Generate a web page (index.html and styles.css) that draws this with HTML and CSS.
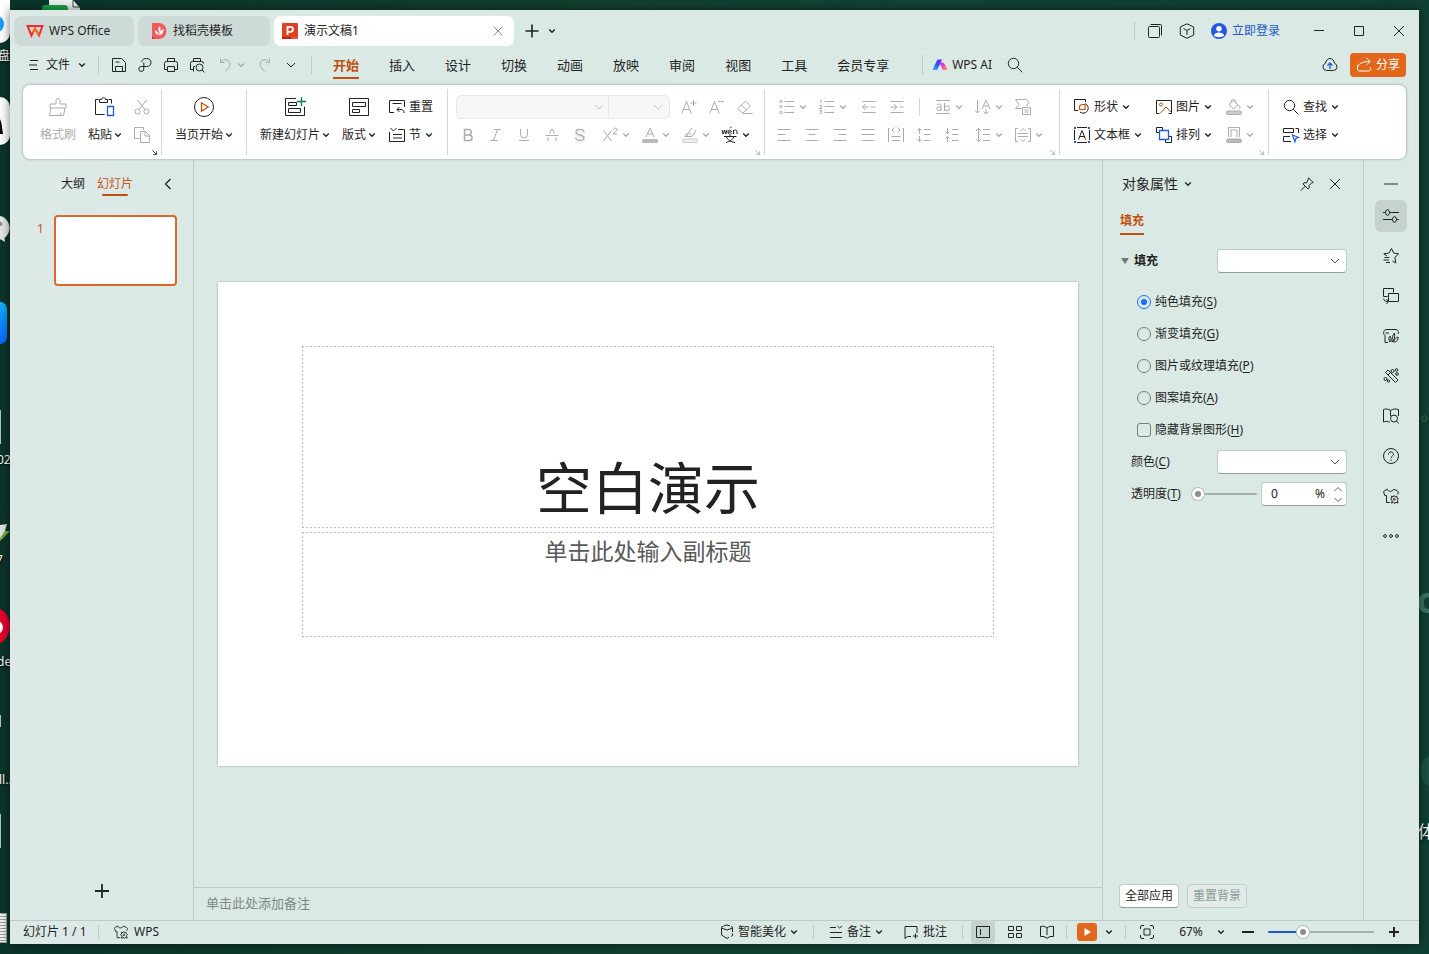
FILE: index.html
```html
<!DOCTYPE html>
<html lang="zh-CN">
<head>
<meta charset="utf-8">
<title>演示文稿1 - WPS Office</title>
<link rel="stylesheet" href="styles.css">
</head>
<body>
<svg class="defs" aria-hidden="true">
  <symbol id="chev" viewBox="0 0 8 8"><path d="M1.2 2.6 4 5.2l2.8-2.6" stroke-width="1.4"/></symbol>
  <symbol id="chev-l" viewBox="0 0 10 8"><path d="M1 2l4 4 4-4"/></symbol>
  <symbol id="corner" viewBox="0 0 6 6"><path d="M.5.5 5 5M5.5 1.500v4h-4"/></symbol>
  <symbol id="search" viewBox="0 0 16 16"><circle cx="6.5" cy="6.5" r="5.2"/><path d="m10.3 10.3 5 5"/></symbol>
  <symbol id="shirt" viewBox="0 0 16 16"><path d="M7 14.500H3.500v-7H1.800L.6 4 1.500 2.500l3-1.200C5 4 9.500 4 10.500 1.300l3.500 1.200L15.400 4l-.8 2.500"/><path d="M11 7.500l1 1.300 1.800-.5.200 1.800 1.500.9-1.300 1.200.8 2.800-2.200-.8-1 1.300-1-1.300-2.300 1 .8-2.700L7.500 11l1.300-1-.3-1.800 1.800.5z"/><circle cx="11.300" cy="11.300" r=".9"/></symbol>
</svg>

<div class="desktop" aria-hidden="true">
  <span class="d tile-a"><i></i></span>
  <span class="d dt t1">盘</span>
  <span class="d tile-b"><svg width="10" height="48" viewBox="0 0 10 48"><path d="M0 22c2 4 2 9 3 15H0z" fill="#000" stroke="none"/></svg></span>
  <svg class="d wechat" width="10" height="28" viewBox="0 0 10 28"><path d="M0 0c6 1 10 7 9.500 13C9.200 17 7 20 4.500 22l.5 4-4-2.500H0z" fill="#e6e6e6" stroke="none"/><circle cx=".5" cy="8" r="2" fill="#8b8b8b" stroke="none"/></svg>
  <span class="d tile-c"></span>
  <span class="d line l1"></span>
  <span class="d dt t2">02</span>
  <svg class="d leaf" width="10" height="20" viewBox="0 0 10 20"><path d="M0 2l7-1-4 14-3 2z" fill="#dfe5e0" stroke="none"/><path d="M5 8h5L0 18v-3z" fill="#7da73c" stroke="none"/></svg>
  <span class="d dt t3">7</span>
  <span class="d red"><i></i></span>
  <span class="d dt t4">de</span>
  <span class="d line l2"></span>
  <span class="d dt t5">ll..</span>
  <span class="d line l3"></span>
  <span class="d doc"></span>
  <svg class="d topdoc" width="40" height="10" viewBox="0 0 40 10"><path d="M7 0h24l7 8v2H7z" fill="#eef3f1" stroke="none"/><path d="M31 0v7h7" stroke="#2c4b42"/><path d="M0 10c0-4 1-5 4-5h18c3 0 4 1 4 5z" fill="#18a64a" stroke="none"/></svg>
  <span class="d ghost g1">o</span>
  <span class="d ghost g2">o</span>
  <span class="d ghost g3">o</span>
  <span class="d dt t6">体</span>
</div>

<div class="window">
  <header class="titlebar">
    <nav class="doctabs">
      <button class="doctab home"><svg class="i16" viewBox="0 0 16 16"><path d="M.5 3H14l1.500 0-3.500 9.500L8 5.500l-3.500 7z" stroke="#f02c2c" stroke-width="2"/><path d="M12 12.500 8 5.500l-2 4" stroke="#ff6a1a" stroke-width="2"/></svg>WPS Office</button>
      <button class="doctab store"><svg class="i16" viewBox="0 0 16 16"><path d="M1 0h7a7.500 8 0 0 1 0 16H1z" fill="#f25a5c" stroke="none"/><path d="M1 13l3 3H1z" fill="#c8323c" stroke="none"/><path d="M8.500 3c1.500 2 1.300 4 0 6.500C7 7 7 5.500 8.500 3zM12.500 6c.3 3-1 6-4.500 6 0-3 1.500-5 4.500-6zM4 7.500c2.500.5 3.500 2 3.500 4.500C5 11.800 4 10 4 7.500z" fill="#fff" stroke="none"/></svg>找稻壳模板</button>
      <div class="doctab active"><svg class="i16" viewBox="0 0 16 16"><rect width="16" height="16" rx="1" fill="#dd4124" stroke="none"/><path d="M0 14h9v2H0z" fill="#b52417" stroke="none"/><path d="M9 14h7v2H9z" fill="#f0512f" stroke="none"/><path d="M5.500 12V3.800h3a2.500 2.500 0 0 1 0 5h-3" stroke="#fff" stroke-width="1.800"/></svg><span>演示文稿1</span><button class="tabclose" aria-label="关闭标签"><svg class="i10" viewBox="0 0 10 10"><path d="m.7.7 8.600 8.600M9.300.7.7 9.300"/></svg></button></div>
    </nav>
    <button class="newtab" aria-label="新建"><svg class="i14" viewBox="0 0 14 14"><path d="M7 .5v13M.5 7h13" stroke-width="1.600"/></svg></button>
    <button class="newmore" aria-label="更多"><svg class="i8"><use href="#chev"/></svg></button>
    <div class="sysarea">
      <button class="slot32" aria-label="窗口"><svg class="i16" viewBox="0 0 16 16"><rect x="1.500" y="3.500" width="11" height="11" rx="1"/><path d="M3.500 1.500h10a1 1 0 0 1 1 1v10"/></svg></button>
      <button class="slot32" aria-label="应用"><svg class="i16" viewBox="0 0 16 16"><path d="M8 .8 14.700 4v8L8 15.300 1.300 12V4zM4.500 5.500 8 7.500l3.500-2M8 7.500v4.500"/></svg></button>
      <a class="login" href="#login"><svg class="i16" viewBox="0 0 16 16"><circle cx="8" cy="8" r="8" fill="#2259e0" stroke="none"/><circle cx="8" cy="5.700" r="2.700" fill="#fff" stroke="none"/><path d="M2.800 12.500c1-4 9.400-4 10.400 0-2.500 2.300-7.900 2.300-10.400 0z" fill="#fff" stroke="none"/></svg>立即登录</a>
      <button class="win" aria-label="最小化"><svg class="i12" viewBox="0 0 12 12"><path d="M1 5.500h10"/></svg></button>
      <button class="win" aria-label="最大化"><svg class="i12" viewBox="0 0 12 12"><path d="M1.500 1.500h9v9h-9z"/></svg></button>
      <button class="win" aria-label="关闭"><svg class="i12" viewBox="0 0 12 12"><path d="m1 1 10 10M11 1 1 11"/></svg></button>
    </div>
  </header>

  <div class="menubar">
    <button class="file"><svg class="i10" viewBox="0 0 10 10"><path d="M1 .5h8M0 5h8M1 9.500h8"/></svg>文件<svg class="i8"><use href="#chev"/></svg></button>
    <div class="quick">
      <button class="slot26" aria-label="保存"><svg class="i16" viewBox="0 0 16 16"><path d="M1.500 1.500h9l4 4v9h-13zM4.500 14.500v-5h7v5M4.500 5h4"/></svg></button>
      <button class="slot26" aria-label="输出"><svg class="i16" viewBox="0 0 16 16"><path d="M4.500 5C5 2.500 7 1.500 9.500 1.500c3 0 4.500 1.600 4.500 4s-1.500 4-4.500 4H4.200a2.500 2.500 0 1 0 2.600 2.500V5.500"/></svg></button>
      <button class="slot26" aria-label="打印"><svg class="i16" viewBox="0 0 16 16"><path d="M4.500 4.500v-3h7v3M4 12.500H1.500v-6a2 2 0 0 1 2-2h9a2 2 0 0 1 2 2v6H12M4.500 9.500h7v5h-7z"/></svg></button>
      <button class="slot26" aria-label="打印预览"><svg class="i16" viewBox="0 0 16 16"><path d="M4.500 4.500v-3h7v3M4 12.500H1.500v-6a2 2 0 0 1 2-2h9a2 2 0 0 1 2 2M4.500 14.500v-5H6"/><circle cx="10.500" cy="10.500" r="3.500"/><path d="m13 13 2.500 2.500"/></svg></button>
      <button class="split off undo" aria-label="撤销" disabled><svg class="i16" viewBox="0 0 16 16"><path d="M3.500 1.500v4h4M3.500 5.500C5 3 7.500 2 10 3c4 1.500 3.500 6.500.5 9L8.500 14.500"/></svg><svg class="i8"><use href="#chev"/></svg></button>
      <button class="slot24 off" aria-label="恢复" disabled><svg class="i16" viewBox="0 0 16 16"><path d="M12.500 1.500v4h-4M12.500 5.500C11 3 8.500 2 6 3 2 4.500 2.500 9.500 5.500 12l2 2.500"/></svg></button>
      <button class="slot28" aria-label="更多"><svg class="i10w"><use href="#chev-l"/></svg></button>
    </div>
    <nav class="menus">
      <a class="on" href="#home">开始</a><a href="#insert">插入</a><a href="#design">设计</a><a href="#trans">切换</a><a href="#anim">动画</a><a href="#show">放映</a><a href="#review">审阅</a><a href="#view">视图</a><a href="#tools">工具</a><a href="#member">会员专享</a>
    </nav>
    <button class="ai"><svg class="i16" viewBox="0 0 16 16"><defs><linearGradient id="ga" x1="0" y1="1" x2="1" y2="0"><stop offset="0" stop-color="#3ac1ff"/><stop offset=".5" stop-color="#2b55f5"/><stop offset="1" stop-color="#7c2cf0"/></linearGradient><linearGradient id="gb" x1="0" y1="0" x2="1" y2="1"><stop offset="0" stop-color="#9b30ff"/><stop offset=".5" stop-color="#ff3fc0"/><stop offset="1" stop-color="#ffa25c"/></linearGradient></defs><path d="M5.500 2.500h4.700L5 13H.3z" fill="url(#ga)" stroke="none"/><path d="M7.500 6c3-1 5 0 6 2.500l2 4.500h-4.500z" fill="url(#gb)" stroke="none"/></svg>WPS AI</button>
    <button class="find" aria-label="搜索"><svg class="i16"><use href="#search"/></svg></button>
    <button class="cloud" aria-label="云同步"><svg class="i16" viewBox="0 0 16 16"><path d="M4.500 13.500a3.700 3.700 0 0 1-1-7.200C4 3 6 1.500 8 1.500s4 1.500 4.500 4.800a3.700 3.700 0 0 1-1 7.200z"/><path d="M8 12V6.500M5.500 8.500 8 6l2.500 2.500" stroke="#2259e0" stroke-width="1.300"/></svg></button>
    <button class="share"><svg class="i16" viewBox="0 0 16 16"><path d="M1.500 8v4a2 2 0 0 0 2 2h9a2 2 0 0 0 2-2v-1.500M1.500 10C3 6.500 6.500 4.500 14 4.500M10.500 1l3.700 3.500-3.700 3.500"/></svg>分享</button>
  </div>

  <section class="ribbon">
    <div class="group g-clip">
      <button class="big w44 off" disabled><svg class="i20" viewBox="0 0 20 20"><path d="M8 7V3.500a2 2 0 0 1 4 0V7h6v4H2V7zM3 11 1.500 18.500h14L17 11M12 18.500l1-3"/></svg><span>格式刷</span></button>
      <button class="big w44"><svg class="i20" viewBox="0 0 20 20"><path d="M3.500 2.500h-3v15h9M13.500 2.500h3v4M4.500 2.500v3h8v-3H10.500c0-2.500-4-2.500-4 0z"/><path d="M12.500 9.500h6v9h-6z" stroke="#2259e0" stroke-width="1.300"/></svg><span>粘贴<svg class="i8"><use href="#chev"/></svg></span></button>
      <div class="rows">
        <button class="slot24 off" aria-label="剪切" disabled><svg class="i16" viewBox="0 0 16 16"><path d="m3.500 1 7.500 9.500M12.500 1 5 10.500"/><circle cx="3.500" cy="12.500" r="2.500"/><circle cx="12.500" cy="12.500" r="2.500"/></svg></button>
        <button class="slot24 off" aria-label="复制" disabled><svg class="i16" viewBox="0 0 16 16"><path d="M5 11.500H.5v-11h9V3M6.500 4.500h5l4 4v7h-9zM11 4.500v4.500h4.500"/></svg></button>
      </div>
      <svg class="corner"><use href="#corner"/></svg>
    </div>
    <div class="group g-play">
      <button class="big"><svg class="i20" viewBox="0 0 20 20"><circle cx="10" cy="10" r="9.500"/><path d="M7.500 5.800v8.400L14.200 10z" stroke="#c8500f" stroke-width="1.300"/></svg><span>当页开始<svg class="i8"><use href="#chev"/></svg></span></button>
    </div>
    <div class="group g-slide">
      <button class="big w78"><svg class="i20" viewBox="0 0 20 20"><path d="M11 1.500H.5v17h19v-9M3.500 5.500h8v3h-8zM3.500 11.500h12v4h-12z"/><path d="M16.500 0v9M12 4.500h9" stroke="#0b7a4b" stroke-width="1.300"/></svg><span>新建幻灯片<svg class="i8"><use href="#chev"/></svg></span></button>
      <button class="big w42"><svg class="i20" viewBox="0 0 20 20"><path d="M.5 1.500h19v17H.5zM3.500 5.500h13v4h-13zM3.500 12.500h7v3h-7z"/></svg><span>版式<svg class="i8"><use href="#chev"/></svg></span></button>
      <div class="rows">
        <button class="txt"><svg class="i16" viewBox="0 0 16 16"><path d="M5 13.500H.5v-12h15V8M3.500 4.500h9M8 10.500h4a3 3 0 0 1 3 3.500M10.500 8 8 10.500l2.500 2.500"/></svg>重置</button>
        <button class="txt"><svg class="i16" viewBox="0 0 16 16"><path d="M1.500 1l3 3 3-3M9 2.500h6.500v12H.5V5M4 7.500h9M4 11h9"/></svg>节<svg class="i8"><use href="#chev"/></svg></button>
      </div>
    </div>
    <div class="group g-font">
      <div class="rows">
        <div class="row">
          <div class="combo"><span class="pick wide"><select aria-label="字体" disabled><option></option></select><svg class="i10w"><use href="#chev-l"/></svg></span><span class="pick"><select aria-label="字号" disabled><option></option></select><svg class="i10w"><use href="#chev-l"/></svg></span></div>
          <button class="slot28 off" aria-label="增大字号" disabled><svg class="i16" viewBox="0 0 16 16"><path d="M.8 14.500 5.500 2.500l4.700 12M2.500 10.500h6M12.500 1v6M9.500 4h6"/></svg></button>
          <button class="slot28 off" aria-label="减小字号" disabled><svg class="i16" viewBox="0 0 16 16"><path d="M.8 14.500 5.500 2.500l4.700 12M2.500 10.500h6M9 2.500h6"/></svg></button>
          <button class="slot28 off" aria-label="清除格式" disabled><svg class="i16" viewBox="0 0 16 16"><path d="M1 9.500 8.500 2l5 5L6.500 13.500H5zM4.500 6l5 5M6 14.500h9.500"/></svg></button>
        </div>
        <div class="row tight off">
          <button class="slot28" aria-label="加粗" disabled><svg class="i16" viewBox="0 0 16 16"><path d="M4.500 2.500h4a2.700 2.700 0 0 1 0 5.400h-4zM4.500 8h4.800a2.700 2.700 0 0 1 0 5.500H4.500z" stroke-width="1.500"/></svg></button>
          <button class="slot28" aria-label="倾斜" disabled><svg class="i16" viewBox="0 0 16 16"><path d="M6 2.500h7M2.500 13.500h7M9.500 2.500l-4 11"/></svg></button>
          <button class="slot28" aria-label="下划线" disabled><svg class="i16" viewBox="0 0 16 16"><path d="M4.500 2v5.500a3.500 3.500 0 0 0 7 0V2M3 13.500h10"/></svg></button>
          <button class="slot28" aria-label="删除线" disabled><svg class="i16" viewBox="0 0 16 16"><path d="M1.500 8.500h13M5.500 6.500 8 2l2.500 4.500M4.500 10.500 3.500 14M11.500 10.500l1 3.500"/></svg></button>
          <button class="slot28 glow" aria-label="阴影" disabled><svg class="i16" viewBox="0 0 16 16"><path d="M12 5c-.3-3.500-8-3.500-8 0 0 4 8 2 8 5.800 0 3.500-8 3.500-8.300-.3" stroke-width="1.300"/></svg></button>
          <button class="split first" aria-label="上标" disabled><svg class="i16" viewBox="0 0 16 16"><path d="m1.500 3.500 8 10.500M9.500 3.500l-8 10.500M11.500 3c0-2.500 3.500-2.500 3.500 0 0 1.500-3.500 2-3.500 4H15"/></svg><svg class="i8"><use href="#chev"/></svg></button>
          <button class="split" aria-label="字体颜色" disabled><svg class="i16" viewBox="0 0 16 16"><path d="M4 10 8 1l4 9M5.500 7h5"/><rect y="12" width="16" height="4" rx="1.500" fill="#b8b8b8" stroke="none"/></svg><svg class="i8"><use href="#chev"/></svg></button>
          <button class="split" aria-label="突出显示" disabled><svg class="i16" viewBox="0 0 16 16"><path d="M3 9.500h7L14 3M5 9l1.500-3.500L9.500 8M6.500 5.500 10 1M3 9.500 5 6"/><rect x=".5" y="12" width="15" height="3.500" rx="1.500" fill="#eee" stroke="#ccc"/></svg><svg class="i8"><use href="#chev"/></svg></button>
          <button class="split dark" aria-label="拼音"><svg class="i16" viewBox="0 0 16 16"><path d="M0 3l1.200 4L2.500 3l1.300 4L5 3M6 5h3.500c0-2.500-3.500-2.500-3.500 0s2 2.500 3.500 1.500M11.500 7V3M11.500 4.500c.5-2 3.500-2 3.500 0V7M8 1.200l1.500-1.500M2 9.500h12.500M8 8v1.500M4 15.500c4-1 7-3 8-6M4.500 10c1 3 4 5 8.500 5.500"/></svg><svg class="i8"><use href="#chev"/></svg></button>
        </div>
      </div>
      <svg class="corner off"><use href="#corner"/></svg>
    </div>
    <div class="group g-para off">
      <div class="rows">
        <div class="row r1">
          <button class="split" aria-label="项目符号" disabled><svg class="i16" viewBox="0 0 16 16"><circle cx="2" cy="2.500" r="1.200"/><circle cx="2" cy="7.500" r="1.200"/><circle cx="2" cy="13.500" r="1.200"/><path d="M5.500 2.500H15M5.500 7.500H15M5.500 13.500H15"/></svg><svg class="i8"><use href="#chev"/></svg></button>
          <button class="split" aria-label="编号" disabled><svg class="i16" viewBox="0 0 16 16"><path d="M1 1.500h1V4M.5 6.500h2V8L.5 9.500h2.500M.5 11.500h2.300L1.500 13c2.500 0 1 2.500-1 1.500M5.500 2.500H15M5.500 7.500H15M5.500 13.500H15"/></svg><svg class="i8"><use href="#chev"/></svg></button>
          <button class="slot28" aria-label="减少缩进" disabled><svg class="i16" viewBox="0 0 16 16"><path d="M1.500 2.500h13M9.500 8h5M1.500 13.500h13M7.500 8H1.500M4.500 5 1.500 8l3 3"/></svg></button>
          <button class="slot28" aria-label="增加缩进" disabled><svg class="i16" viewBox="0 0 16 16"><path d="M1.500 2.500h13M10.500 8h4M1.500 13.500h13M1.500 8H8M5 5l3 3-3 3"/></svg></button>
          <span class="bar"></span>
          <button class="split" aria-label="文字间距" disabled><svg class="i16" viewBox="0 0 16 16"><path d="M1 1.500h14M1 14.500h14M2 6c1-1.500 4-1.500 4 .5V12M6 8C2 8 1.500 9 1.500 10s2 2.500 4.500.5M9.500 4v8"/><circle cx="12" cy="9.300" r="2.500"/></svg><svg class="i8"><use href="#chev"/></svg></button>
          <button class="split" aria-label="文字方向" disabled><svg class="i16" viewBox="0 0 16 16"><path d="M2.500 1v13M0 11.500 2.500 14 5 11.500M7 10l4-9 4 9M8.500 7h5M11 10v5M8.500 12.500 11 15l2.500-2.500"/></svg><svg class="i8"><use href="#chev"/></svg></button>
          <button class="slot24" aria-label="转换图形" disabled><svg class="i16" viewBox="0 0 16 16"><path d="M6.500 9.500H.5L4 5.500.5.500h11L14 3.500 11.500 7M7.500 8.500h8v7h-8zM9.500 11h4M9.500 13h4"/></svg></button>
        </div>
        <div class="row r2">
          <button class="slot28" aria-label="左对齐" disabled><svg class="i16" viewBox="0 0 16 16"><path d="M1.500 2.500h13M1.500 7.500h8M1.500 13.500h13"/></svg></button>
          <button class="slot28" aria-label="居中" disabled><svg class="i16" viewBox="0 0 16 16"><path d="M1.500 2.500h13M4.500 7.500h7M1.500 13.500h13"/></svg></button>
          <button class="slot28" aria-label="右对齐" disabled><svg class="i16" viewBox="0 0 16 16"><path d="M1.500 2.500h13M6.500 7.500h8M1.500 13.500h13"/></svg></button>
          <button class="slot28" aria-label="两端对齐" disabled><svg class="i16" viewBox="0 0 16 16"><path d="M1.500 2.500h13M1.500 7.500h13M1.500 13.500h13"/></svg></button>
          <button class="slot28" aria-label="分散对齐" disabled><svg class="i16" viewBox="0 0 16 16"><path d="M.5 1v14M15.500 1v14M3.500 9.500h9M3.500 13.500h9M6.500.5 4 3l2.500 2.500M9.500.5 12 3 9.500 5.500"/></svg></button>
          <button class="slot28" aria-label="增大段距" disabled><svg class="i16" viewBox="0 0 16 16"><path d="M3.500 7V1.500M1.500 3.500l2-2 2 2M3.500 9v5.500M1.500 12.500l2 2 2-2M8 2.500h6.500M8 7.500h6.500M8 13.500h6.500"/></svg></button>
          <button class="slot28" aria-label="减小段距" disabled><svg class="i16" viewBox="0 0 16 16"><path d="M3.500 1v5.500M1.500 4.500l2 2 2-2M3.500 15V9.500M1.500 11.500l2-2 2 2M8 2.500h6.500M8 7.500h6.500M8 13.500h6.500"/></svg></button>
          <button class="split last" aria-label="行距" disabled><svg class="i16" viewBox="0 0 16 16"><path d="M3.500 1.500v13M1 4l2.500-2.500L6 4M1 12l2.500 2.500L6 12M8 2.500h7M8 7.500h7M8 13.500h7"/></svg><svg class="i8"><use href="#chev"/></svg></button>
          <button class="split" aria-label="对齐文本" disabled><svg class="i16" viewBox="0 0 16 16"><path d="M3 1.500H.5v13H3M13 1.500h2.500v13H13M3 6.500h10M3 9.500h10M5.500 4 8 1.500 10.500 4M5.500 12 8 14.500l2.500-2.500"/></svg><svg class="i8"><use href="#chev"/></svg></button>
        </div>
      </div>
      <svg class="corner"><use href="#corner"/></svg>
    </div>
    <div class="group g-draw">
      <div class="grid">
        <button class="txt"><svg class="i16" viewBox="0 0 16 16"><path d="M4 11.500H.5V.5h11V3"/><path d="M6 13a5 5 0 1 0 5-8.500" /><path d="M5.500 10.500v-2a3 3 0 0 1 3-3h2.500v5z" stroke="#c8500f" stroke-width="1.200"/></svg>形状<svg class="i8"><use href="#chev"/></svg></button>
        <button class="txt"><svg class="i16" viewBox="0 0 16 16"><path d="M3.500 14.500h-3v-13h15v13h-3"/><circle cx="5" cy="5.500" r="1.500" stroke="#c8500f"/><path d="m4 14.500 6-6.500 5.500 5.500" stroke="#c8500f"/></svg>图片<svg class="i8"><use href="#chev"/></svg></button>
        <button class="split off" aria-label="填充" disabled><svg class="i16" viewBox="0 0 16 16"><path d="M3 5.500 7.500 1.500 12 6 7.500 10zM5 3.500C5-.5 10-.5 10 3.500M12.500 6c2 2 2 3.500.5 3.500"/><rect x=".5" y="12" width="15" height="3.500" rx="1.500" fill="#ccc"/></svg><svg class="i8"><use href="#chev"/></svg></button>
        <button class="txt"><svg class="i16" viewBox="0 0 16 16"><path d="M3 .5h10M3 15.500h10M.5 3v10M15.500 3v10M4.500 12.500 8 3.500l3.500 9M5.500 9.500h5"/><path d="M0 0h2v2H0zM14 0h2v2h-2zM0 14h2v2H0zM14 14h2v2h-2z" fill="#2259e0" stroke="none"/></svg>文本框<svg class="i8"><use href="#chev"/></svg></button>
        <button class="txt"><svg class="i16" viewBox="0 0 16 16"><path d="M3 5.500H.5v-5h6V3M13 9.500h2.500v6h-6V13"/><path d="M3.500 3.500h9v9h-9z" stroke="#2259e0" stroke-width="1.300"/></svg>排列<svg class="i8"><use href="#chev"/></svg></button>
        <button class="split off" aria-label="轮廓" disabled><svg class="i16" viewBox="0 0 16 16"><path d="M2.500 10V.5h11V10M5 10V3h6v7"/><rect x=".5" y="12" width="15" height="3.500" rx="1.500" fill="#bbb"/></svg><svg class="i8"><use href="#chev"/></svg></button>
      </div>
      <svg class="corner off"><use href="#corner"/></svg>
    </div>
    <div class="group g-edit">
      <div class="rows">
        <button class="txt"><svg class="i16"><use href="#search"/></svg>查找<svg class="i8"><use href="#chev"/></svg></button>
        <button class="txt"><svg class="i16" viewBox="0 0 16 16"><path d="M.5 1.500h10v4H.5zM12.500 1.500h3V6M7 9.500H.5v5H8"/><path d="m9.500 8 6 2.500-2.700 1-.9 3.200z" stroke="#2259e0" stroke-width="1.200"/></svg>选择<svg class="i8"><use href="#chev"/></svg></button>
      </div>
    </div>
  </section>

  <main class="work">
    <aside class="thumbs">
      <div class="thumbtabs"><button>大纲</button><button class="on">幻灯片</button><button class="fold" aria-label="收起"><svg class="i12" viewBox="0 0 12 12"><path d="M8.500 1 3.500 6l5 5" stroke-width="1.300"/></svg></button></div>
      <div class="thumbrow"><span>1</span><div class="thumb"></div></div>
      <button class="addslide" aria-label="新建幻灯片"><svg class="i14" viewBox="0 0 14 14"><path d="M7 0v14M0 7h14" stroke-width="1.800"/></svg></button>
    </aside>

    <section class="center">
      <div class="canvas">
        <article class="slide">
          <h1 class="ph title">空白演示</h1>
          <p class="ph sub">单击此处输入副标题</p>
        </article>
      </div>
      <p class="notes">单击此处添加备注</p>
    </section>

    <aside class="props">
      <div class="phead"><h2>对象属性</h2><svg class="i8"><use href="#chev"/></svg><button class="slot28 pin" aria-label="固定"><svg class="i14" viewBox="0 0 14 14"><path d="m8.500.8 4.700 4.700-1.700.5-2.500 2.500.3 2.500-1.300 1L3 7l1-1.300 2.500.3L8 3zM5 9.500.8 13.500"/></svg></button><button class="slot28" aria-label="关闭"><svg class="i12" viewBox="0 0 12 12"><path d="m1 1 10 10M11 1 1 11"/></svg></button></div>
      <div class="ptabs"><button class="on">填充</button></div>
      <div class="field first"><span class="tri"></span><label class="bold" for="fill">填充</label><span class="pick box"><select id="fill"><option></option></select><svg class="i10w"><use href="#chev-l"/></svg></span></div>
      <div class="options">
        <label><input type="radio" name="fill" checked><span>纯色填充(<u>S</u>)</span></label>
        <label><input type="radio" name="fill"><span>渐变填充(<u>G</u>)</span></label>
        <label><input type="radio" name="fill"><span>图片或纹理填充(<u>P</u>)</span></label>
        <label><input type="radio" name="fill"><span>图案填充(<u>A</u>)</span></label>
        <label><input type="checkbox"><span>隐藏背景图形(<u>H</u>)</span></label>
      </div>
      <div class="field"><label for="color">颜色(<u>C</u>)</label><span class="pick box"><select id="color"><option></option></select><svg class="i10w"><use href="#chev-l"/></svg></span></div>
      <div class="field"><label for="alpha">透明度(<u>T</u>)</label><input class="range alpha" type="range" min="0" max="100" value="0" aria-label="透明度滑块"><span class="spin"><input id="alpha" type="text" value="0"><span>%</span><span class="ud"><svg class="i8" viewBox="0 0 8 8"><path d="M.5 6 4 2.500 7.500 6"/></svg><svg class="i8" viewBox="0 0 8 8"><path d="M.5 2 4 5.500 7.500 2"/></svg></span></span></div>
      <div class="pfoot"><button class="pbtn">全部应用</button><button class="pbtn gray" disabled>重置背景</button></div>
    </aside>

    <nav class="side">
      <button class="min" aria-label="折叠"><svg class="i16" viewBox="0 0 16 16"><path d="M1 8h14" stroke="#888" stroke-width="2"/></svg></button>
      <button class="on" aria-label="对象属性"><svg class="i16" viewBox="0 0 16 16"><ellipse cx="4.500" cy="4.500" rx="2" ry="2.800"/><ellipse cx="11.500" cy="11.500" rx="2" ry="2.800"/><path d="M0 4.500h2.500M6.500 4.500H16M0 11.500h9.500M13.500 11.500H16"/></svg></button>
      <button aria-label="动画"><svg class="i16" viewBox="0 0 16 16"><path d="M4 8 .8 5.800l5.200-.8L8.500.5l2.200 4.500 5 .8-3.800 3.600 1 5.600-3.400-2M1.500 9.500h5M.5 12H6M3 14.500h4"/></svg></button>
      <button aria-label="切换"><svg class="i16" viewBox="0 0 16 16"><path d="M4.500 8.500h-4v-8h10v4M5.500 5.500h10v8h-10zM.8 10.500c0 2 1 3 4 3M3.500 11l2 2.500-2 2.500"/></svg></button>
      <button aria-label="素材"><svg class="i16" viewBox="0 0 16 16"><path d="M5 14.500H2v-7C-.5 5.500.5 1.500 4 1.500h9c2.500.5 3 3 2 4.500M6 5H2.500M7 14c-2-3-1-5 0-6 1 2 1.500 4 0 6zM9 14c0-4 .5-7 2.500-9 .5 4 0 7-2.500 9zM10.500 14c1-3 2.500-4.500 4.500-5 .5 3-1 5-4.500 5z"/></svg></button>
      <button aria-label="智能美化"><svg class="i16" viewBox="0 0 16 16"><path d="M2.500 4.500 5 2l10 10-2.500 2.500zM5 7l2.500-2.500"/><circle cx="9.500" cy="3" r="1.500"/><circle cx="13.500" cy="2" r="1.300"/><circle cx="14" cy="6" r="1.300"/><circle cx="2.500" cy="11" r="1.500"/><circle cx="5.500" cy="13" r="1.200"/></svg></button>
      <button aria-label="资料"><svg class="i16" viewBox="0 0 16 16"><path d="M7 14.500c-2-1.500-4-1.500-6.500-.5V1.500c2.500-1 5-.5 7 1 2-1.500 5-2 8-1V8M7.500 2.500V8"/><circle cx="11" cy="10.500" r="3.500"/><path d="m13.500 13 2 2.500"/></svg></button>
      <button aria-label="帮助"><svg class="i16" viewBox="0 0 16 16"><circle cx="8" cy="8" r="7.500"/><path d="M5.500 6.500c0-3.500 5-3.500 5 0C10.500 8 8 8 8 10M8 11.500V13"/></svg></button>
      <button aria-label="皮肤"><svg class="i16"><use href="#shirt"/></svg></button>
      <button aria-label="更多"><svg class="i16" viewBox="0 0 16 16"><circle cx="2" cy="8" r="1.400"/><circle cx="8" cy="8" r="1.400"/><circle cx="14" cy="8" r="1.400"/></svg></button>
    </nav>
  </main>

  <footer class="status">
    <span class="pages">幻灯片 1 / 1</span>
    <button class="skin"><svg class="i14" viewBox="0 0 16 16"><use href="#shirt"/></svg>WPS</button>
    <div class="right">
      <button class="st s1"><svg class="i14" viewBox="0 0 14 14"><path d="M4 .8 7 0l3 .8M1.500 3 7 5l5.500-2M1.500 3v7L7 13.500l2-1.200M1 2.500 3.500 1M12.500 3v4M11 11.500l1.500-1V8.500M11 1.500l2 1"/></svg>智能美化<svg class="i8"><use href="#chev"/></svg></button>
      <button class="st s2"><svg class="i14" viewBox="0 0 14 14"><path d="M1 2.500h6M1 7.500h12M1 12.500h12M8.500 1l2.200 2L13 1"/></svg>备注<svg class="i8"><use href="#chev"/></svg></button>
      <button class="st s3"><svg class="i14" viewBox="0 0 14 14"><path d="M7 11.500H3.500L1 13.500v-12h12V8M11.500 8.500v5M9 11h5"/></svg>批注</button>
      <div class="views">
        <button class="on" aria-label="普通视图"><svg class="i14" viewBox="0 0 14 14"><path d="M.5 1.500h13v11H.5zM4.500 4v6"/></svg></button>
        <button aria-label="浏览视图"><svg class="i14" viewBox="0 0 14 14"><path d="M.5 1.500h5v4h-5zM8.500 1.500h5v4h-5zM.5 8.500h5v4h-5zM8.500 8.500h5v4h-5z"/></svg></button>
        <button aria-label="阅读视图"><svg class="i14" viewBox="0 0 14 14"><path d="M7 3C5 1.300 3 1 .5 1.500v10H4l3 1.800 3-1.800h3.500v-10C11 1 9 1.300 7 3zM7 3v7"/></svg></button>
      </div>
      <div class="playbox"><button class="play" aria-label="放映"><svg class="i10" viewBox="0 0 10 10"><path d="M2.500 1 9 5 2.500 9z" fill="#fff" stroke="none"/></svg></button><button class="slot24" aria-label="放映选项"><svg class="i8"><use href="#chev"/></svg></button></div>
      <button class="fit" aria-label="适应窗口"><svg class="i14" viewBox="0 0 14 14"><path d="M4 .5H2A1.500 1.500 0 0 0 .5 2v2M10 .5h2A1.500 1.500 0 0 1 13.500 2v2M.5 10v2A1.500 1.500 0 0 0 2 13.500h2M13.500 10v2a1.500 1.500 0 0 1-1.500 1.500h-2M4 4h6v6H4z"/></svg></button>
      <button class="zoomval">67%<svg class="i8"><use href="#chev"/></svg></button>
      <button class="slot24" aria-label="缩小"><svg class="i12" viewBox="0 0 12 12"><path d="M0 6h12" stroke-width="2"/></svg></button>
      <input class="range zoom" type="range" min="0" max="100" value="31" aria-label="缩放">
      <button class="slot24" aria-label="放大"><svg class="i10" viewBox="0 0 10 10"><path d="M0 5h10M5 0v10" stroke-width="2"/></svg></button>
    </div>
  </footer>
</div>
</body>
</html>
```
FILE: styles.css
```css
* { box-sizing: border-box; }

body {
  margin: 0;
  height: 100vh;
  overflow: hidden;
  display: flex;
  padding: 10px;
  position: relative;
  background: linear-gradient(90deg, #0b352b, #11402f 40%, #124336 60%, #104034);
  font: 12px/16px "Noto Sans", "Noto Sans CJK SC", sans-serif;
  color: #1f2423;
}

h1, h2, p { margin: 0; font-weight: 400; }
a { color: inherit; text-decoration: none; }
button, input, select { font: inherit; color: inherit; margin: 0; }
button { border: 0; padding: 0; background: none; display: flex; align-items: center; justify-content: center; flex: none; white-space: nowrap; }
svg { fill: none; stroke: currentColor; stroke-width: 1; flex: none; display: block; overflow: visible; }
.defs { position: absolute; width: 0; height: 0; }
.i8 { width: 8px; height: 8px; }
.i10 { width: 10px; height: 10px; }
.i10w { width: 10px; height: 8px; }
.i12 { width: 12px; height: 12px; }
.i14 { width: 14px; height: 14px; }
.i16 { width: 16px; height: 16px; }
.i20 { width: 20px; height: 20px; }
.off { color: #a9adab; }
.dark { color: #222; }
.slot24 { width: 24px; height: 24px; }
.slot26 { width: 26px; height: 24px; }
.slot28 { width: 28px; height: 24px; }
.slot32 { width: 32px; height: 32px; }
.split { width: 32px; height: 24px; padding-left: 4px; gap: 4px; justify-content: flex-start; }

/* desktop behind the window */
.desktop { position: absolute; inset: 0; overflow: hidden; }
.d { position: absolute; left: 0; }
.dt { color: #fff; text-shadow: 1px 1px 2px #000; white-space: nowrap; }
.tile-a { top: 0; width: 10px; height: 43px; background: #fff; border-radius: 0 0 10px 0; overflow: hidden; }
.tile-a i { position: absolute; left: -10px; top: 16px; width: 14px; height: 16px; border-radius: 50%; background: #12a0ff; }
.t1 { top: 48px; left: -2px; }
.tile-b { top: 97px; width: 10px; height: 48px; background: #fff; border-radius: 0 10px 10px 0; }
.wechat { top: 216px; }
.tile-c { top: 302px; width: 7px; height: 42px; border-radius: 0 8px 8px 0; background: linear-gradient(#0fb2ff, #0a66ff); }
.line { width: 1px; background: #b6c2be; }
.l1 { top: 410px; height: 34px; }
.t2 { top: 452px; left: -3px; }
.leaf { top: 523px; }
.t3 { top: 552px; left: -4px; }
.red { top: 606px; left: -30px; width: 40px; height: 40px; border-radius: 50%; background: #e5002d; }
.red i { position: absolute; right: 7px; top: 15px; width: 12px; height: 13px; border-radius: 50%; background: #fff; }
.t4 { top: 654px; left: -3px; }
.l2 { top: 715px; height: 12px; }
.t5 { top: 772px; left: -1px; }
.l3 { top: 814px; height: 34px; }
.doc { top: 913px; width: 7px; height: 30px; border: 1px solid #9aa19e; border-left: 0; background: repeating-linear-gradient(#f4f4f4 0 2px, #999 2px 3px); }
.topdoc { left: 42px; top: 0; }
.ghost { left: auto; right: -4px; color: #3a7464; font-weight: 700; }
.g1 { top: 410px; right: 1px; color: #23584b; }
.g2 { top: 580px; right: -10px; font-size: 36px; line-height: 40px; }
.g3 { top: 740px; right: -26px; font-size: 60px; line-height: 48px; color: #1d5144; }
.t6 { top: 821px; left: auto; right: -6px; font-size: 17px; line-height: 22px; }

.window {
  position: relative;
  flex: 1;
  min-width: 0;
  display: flex;
  flex-direction: column;
  background: linear-gradient(90deg, #dde9e7, #dae9e4 16%, #dbe9e4);
  box-shadow: 0 0 10px rgba(0, 0, 0, .55);
}

/* title bar */
.titlebar { display: flex; align-items: center; height: 40px; padding-left: 4px; padding-top: 1px; flex: none; }
.doctabs { display: flex; gap: 4px; }
.doctab { display: flex; align-items: center; justify-content: flex-start; gap: 6px; height: 30px; border-radius: 7px; background: #cddad7; padding: 0 12px; }
.home { width: 120px; padding-left: 13px; }
.store { width: 132px; padding-left: 13px; }
.doctab.active { width: 240px; background: #fff; padding: 0 8px; }
.tabclose { margin-left: auto; width: 16px; height: 16px; color: #8a8a8a; }
.newtab { width: 36px; height: 30px; }
.newmore { width: 4px; height: 30px; }
.sysarea { display: flex; align-items: center; margin-left: auto; height: 40px; }
.sysarea::before { content: ""; width: 1px; height: 18px; background: #bfcdc9; margin-right: 4px; }
.login { display: flex; align-items: center; gap: 5px; color: #2259c8; margin: 0 19px 0 8px; }
.login svg { color: #fff; }
.win { width: 40px; height: 40px; }

/* menu bar */
.menubar { display: flex; align-items: center; height: 34px; padding: 0 13px 4px 19px; flex: none; }
.file { gap: 7px; margin-right: 12px; }
.file .i8 { margin-left: 1px; }
.quick { display: flex; align-items: center; height: 18px; padding: 0 6px 0 7px; border: solid #bfcdc9; border-width: 0 1px; }
.quick .split { margin: 0 8px 0 3px; }
.menus { display: flex; gap: 30px; margin-left: 21px; font-size: 13px; line-height: 20px; height: 20px; white-space: nowrap; }
.menus a { border-bottom: 2px solid transparent; height: 24px; }
.menus a.on { color: #c0500f; border-color: #c0500f; font-weight: 700; }
.ai { gap: 4px; margin-left: 33px; padding-left: 9px; height: 20px; border-left: 1px solid #bfcdc9; }
.find { margin-left: 15px; }
.cloud { margin-left: auto; margin-right: 12px; }
.share { width: 56px; height: 24px; gap: 4px; border-radius: 4px; background: #e3671b; color: #fff; }

/* ribbon */
.ribbon { display: flex; flex: none; margin: 1px 13px; padding: 4px 0; height: 74px; background: #fff; border-radius: 7px; box-shadow: 0 0 3px rgba(70, 100, 90, .55); position: relative; z-index: 1; }
.group { position: relative; display: flex; flex: none; align-items: flex-start; padding-top: 4px; border-right: 1px solid #d4d7d6; }
.rows { display: flex; flex-direction: column; }
.rows > *, .grid > * { height: 28px; }
.row { display: flex; align-items: center; }
.big { display: grid; grid-template-rows: 28px 28px; place-items: center; }
.big span { display: flex; align-items: center; gap: 2px; }
.txt { gap: 4px; justify-content: flex-start; }
.w42 { width: 42px; }
.w44 { width: 44px; }
.w78 { width: 78px; }
.corner { position: absolute; right: 4px; bottom: 0; width: 5px; height: 5px; }
.g-clip { width: 139px; padding-left: 13px; gap: 3px; }
.g-play { width: 85px; justify-content: center; }
.g-slide { width: 201px; padding-left: 9px; gap: 4px; }
.g-slide .rows { padding-left: 5px; }
.g-font { width: 317px; padding-left: 6px; }
.g-font .split { margin-right: 8px; }
.g-font .first { margin-left: 4px; }
.combo { display: flex; width: 214px; height: 24px; margin: 0 5px 0 2px; border: 1px solid #e8e8e8; border-radius: 5px; background: #f7f7f7; color: #c8c8c8; }
.pick { position: relative; display: flex; flex: 1; }
.pick select { appearance: none; flex: 1; width: 100%; border: 0; background: none; opacity: 1; padding: 0 24px 0 8px; }
.pick svg { position: absolute; right: 6px; top: 50%; margin-top: -4px; pointer-events: none; }
.wide { flex: 0 0 152px; border-right: 1px solid #e8e8e8; }
.wide svg { right: 4px; }
.glow svg { filter: drop-shadow(0 2px 1px #ddd); }
.g-para { width: 295px; }
.r1 { padding-left: 10px; }
.r1 .split { margin-right: 8px; }
.r2 { padding-left: 5px; }
.r2 .split { margin-right: 8px; }
.r2 .last { margin-left: 5px; }
.bar { width: 1px; height: 18px; background: #d4d7d6; margin: 0 11px 0 8px; }
.g-draw { width: 209px; padding-left: 14px; }
.grid { display: grid; grid-template-columns: 82px 66px 32px; }
.g-edit { border: 0; padding-left: 14px; }

/* work area */
.work { flex: 1; min-height: 0; display: flex; }
.thumbs { width: 184px; flex: none; border-right: 1px solid #bccbc7; display: flex; flex-direction: column; }
.thumbtabs { display: flex; gap: 12px; padding: 16px 19px 0 51px; }
.thumbtabs .on { position: relative; color: #c8541a; }
.thumbtabs .on::after { content: ""; position: absolute; left: 5px; right: 5px; bottom: -4px; height: 2px; background: #c0500f; border-radius: 1px; }
.fold { margin-left: auto; }
.thumbrow { display: flex; gap: 10px; padding: 23px 16px 0 27px; }
.thumbrow span { color: #c8541a; padding-top: 6px; width: 7px; }
.thumb { flex: 1; aspect-ratio: 123 / 71; background: #fff; border: 2px solid #d96a2b; border-radius: 4px; }
.addslide { margin: auto auto 22px 85px; }
.center { flex: 1; min-width: 0; display: flex; flex-direction: column; }
.canvas { flex: 1; min-height: 0; display: flex; align-items: center; padding: 1px 24px 0; }
.slide { flex: 1; aspect-ratio: 16 / 9; background: #fff; box-shadow: 0 0 2px #8fa19b; padding: 64px 84px 0; display: flex; flex-direction: column; gap: 4px; }
.ph {
  --h: repeating-linear-gradient(90deg, #bdbdbd 0 2px, transparent 2px 4px);
  --v: repeating-linear-gradient(#bdbdbd 0 2px, transparent 2px 4px);
  background: var(--h) top / 100% 1px no-repeat, var(--h) bottom / 100% 1px no-repeat, var(--v) left / 1px 100% no-repeat, var(--v) right / 1px 100% no-repeat;
  text-align: center;
}
.title { height: 182px; font-size: 56px; line-height: 64px; display: flex; align-items: flex-end; justify-content: center; padding-bottom: 9px; color: #222; }
.sub { height: 105px; font-size: 23px; line-height: 32px; padding-top: 3px; color: #595959; }
.notes { border-top: 1px solid #bccbc7; height: 33px; padding: 7px 12px; font-size: 13px; color: #7d8885; }

/* property panel */
.props { width: 262px; flex: none; border: solid #c9cccb; border-width: 0 1px; display: flex; flex-direction: column; padding: 0 16px 12px; }
.phead { display: flex; align-items: center; height: 24px; margin-top: 12px; padding-left: 3px; }
.phead h2 { font-size: 14px; line-height: 20px; margin-right: 6px; }
.pin { margin-left: auto; }
.phead .slot28:last-child { margin-right: -2px; }
.ptabs { display: flex; margin-top: 17px; padding-left: 1px; }
.ptabs button { color: #c0500f; font-weight: 700; border-bottom: 2px solid #c0500f; padding-bottom: 4px; }
.field { display: flex; align-items: center; height: 32px; padding-left: 12px; }
.field.first { padding-left: 2px; margin-top: 10px; }
.tri { border: 4px solid transparent; border-top: 6px solid #6f7775; border-bottom: 0; margin-right: 5px; }
.bold { font-weight: 700; }
.box { flex: 0 0 130px; height: 24px; margin-left: auto; }
.box svg { color: #555; }
.box, .spin, .pbtn { background: #fff; border: 1px solid #bfcdc9; border-bottom-color: #92a09c; border-radius: 4px; }
.options { padding: 9px 0 0 18px; }
.options label { display: flex; align-items: center; gap: 4px; height: 32px; }
.options input { appearance: none; width: 14px; height: 14px; border: 1px solid #75807d; border-radius: 50%; display: grid; place-items: center; }
.options input[type="checkbox"] { border-radius: 3px; }
.options input:checked { border-color: #1a6cff; }
.options input:checked::before { content: ""; width: 6px; height: 6px; border-radius: 50%; background: #1a6cff; }
u { text-underline-offset: 2px; }
.range { appearance: none; height: 16px; background: none; }
.range::-webkit-slider-runnable-track { height: 2px; border-radius: 1px; background: #a5afac; }
.range::-webkit-slider-thumb { appearance: none; width: 12px; height: 12px; margin-top: -5px; border-radius: 50%; border: 3px solid #fff; background: #8a8f8d; box-shadow: 0 0 0 1px #b4bebb; }
.alpha { width: 65px; margin-left: auto; margin-right: 4px; }
.spin { display: flex; align-items: center; width: 86px; height: 24px; padding: 0 4px 0 9px; }
.spin input { border: 0; padding: 0; width: 44px; background: none; }
.ud { display: flex; flex-direction: column; gap: 3px; margin-left: auto; color: #666; }
.pfoot { display: flex; gap: 8px; margin-top: auto; }
.pbtn { width: 60px; height: 24px; }
.gray { background: #e2ebe8; border-color: #c2cecb; color: #8d9795; }

/* side strip */
.side { width: 55px; flex: none; display: flex; flex-direction: column; align-items: center; gap: 8px; padding: 16px 1px 0 0; }
.side button { width: 32px; height: 32px; border-radius: 6px; }
.side .min { height: 16px; }
.side .on { background: #c5d2ce; }

/* status bar */
.status { display: flex; align-items: center; flex: none; height: 24px; padding: 0 13px 1px; border-top: 1px solid #bccbc7; }
.pages { width: 76px; border-right: 1px solid #bfcdc9; line-height: 14px; white-space: nowrap; }
.skin { gap: 6px; padding-left: 15px; }
.right { display: flex; align-items: center; margin-left: auto; height: 22px; }
.st { gap: 4px; justify-content: flex-start; height: 14px; }
.s1 { width: 94px; border-right: 1px solid #bfcdc9; }
.s2 { width: 75px; margin-left: 15px; }
.s3 { width: 59px; gap: 5px; border-right: 1px solid #bfcdc9; }
.views { display: flex; gap: 8px; padding: 0 7px 0 8px; }
.views button { width: 24px; height: 24px; border-radius: 4px; }
.views .on { background: #c5d2ce; }
.playbox { display: flex; align-items: center; height: 14px; border: solid #bfcdc9; border-width: 0 1px; padding: 0 4px 0 10px; }
.play { width: 20px; height: 18px; border-radius: 3px; background: #e3671b; }
.fit { width: 42px; height: 24px; }
.zoomval { width: 68px; gap: 14px; }
.zoom { width: 106px; margin: 0 8px; }
.zoom::-webkit-slider-runnable-track { background: linear-gradient(90deg, #2259c8 33%, #a5afac 33%); }
```
